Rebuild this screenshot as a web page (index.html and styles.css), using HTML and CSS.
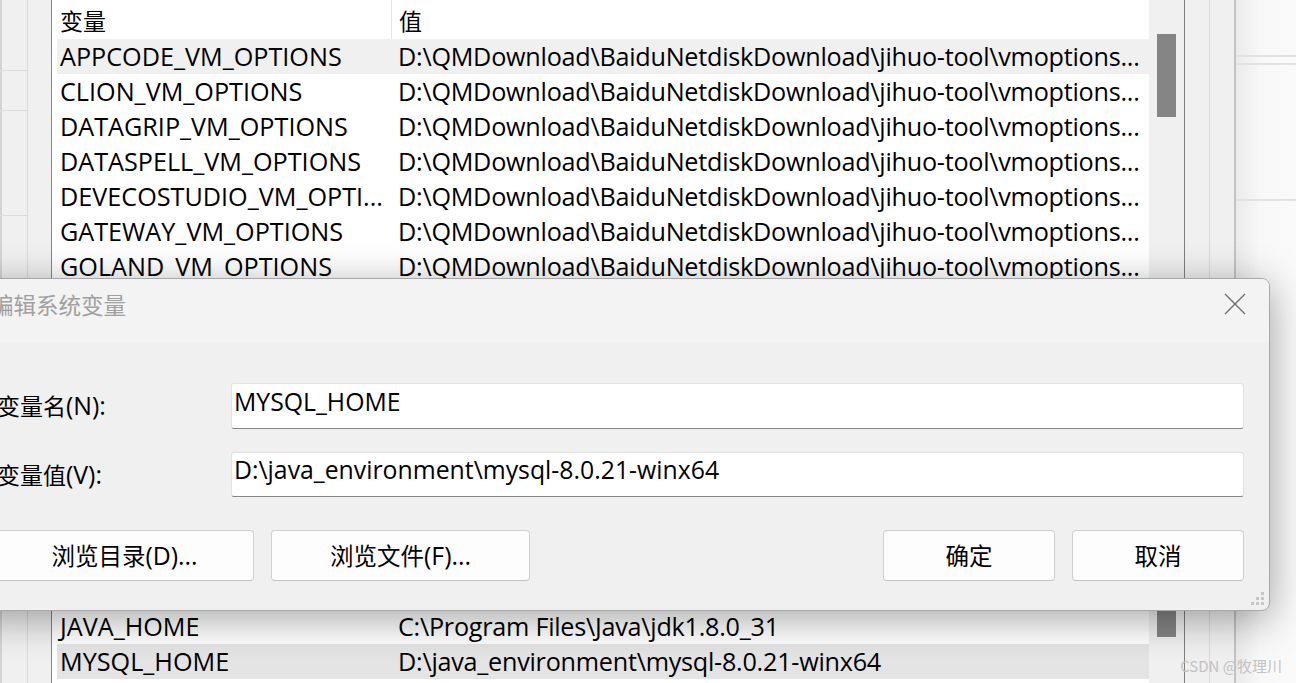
FILE: index.html
```html
<!DOCTYPE html>
<html lang="zh-CN">
<head>
    <meta charset="UTF-8">
    <title>编辑系统变量</title>
    <link rel="stylesheet" href="styles.css">
</head>
<body>
    <div class="screen">
        <div class="envwin">
            <div class="gutter">
                <div class="gutter-mark m1"></div>
                <div class="gutter-mark m2"></div>
                <div class="gutter-mark m3"></div>
            </div>
            <div class="varlist">
                <div class="list-head">
                    <div class="cell name"><span class="zh">变量</span></div>
                    <div class="cell value"><span class="zh">值</span></div>
                </div>
                <div class="row hover">
                    <div class="cell name">APPCODE_VM_OPTIONS</div>
                    <div class="cell value">D:\QMDownload\BaiduNetdiskDownload\jihuo-tool\vmoptions...</div>
                </div>
                <div class="row">
                    <div class="cell name">CLION_VM_OPTIONS</div>
                    <div class="cell value">D:\QMDownload\BaiduNetdiskDownload\jihuo-tool\vmoptions...</div>
                </div>
                <div class="row">
                    <div class="cell name">DATAGRIP_VM_OPTIONS</div>
                    <div class="cell value">D:\QMDownload\BaiduNetdiskDownload\jihuo-tool\vmoptions...</div>
                </div>
                <div class="row">
                    <div class="cell name">DATASPELL_VM_OPTIONS</div>
                    <div class="cell value">D:\QMDownload\BaiduNetdiskDownload\jihuo-tool\vmoptions...</div>
                </div>
                <div class="row">
                    <div class="cell name">DEVECOSTUDIO_VM_OPTI...</div>
                    <div class="cell value">D:\QMDownload\BaiduNetdiskDownload\jihuo-tool\vmoptions...</div>
                </div>
                <div class="row">
                    <div class="cell name">GATEWAY_VM_OPTIONS</div>
                    <div class="cell value">D:\QMDownload\BaiduNetdiskDownload\jihuo-tool\vmoptions...</div>
                </div>
                <div class="row">
                    <div class="cell name">GOLAND_VM_OPTIONS</div>
                    <div class="cell value">D:\QMDownload\BaiduNetdiskDownload\jihuo-tool\vmoptions...</div>
                </div>
                <div class="list-gap"></div>
                <div class="row">
                    <div class="cell name">JAVA_HOME</div>
                    <div class="cell value">C:\Program Files\Java\jdk1.8.0_31</div>
                </div>
                <div class="row selected">
                    <div class="cell name">MYSQL_HOME</div>
                    <div class="cell value">D:\java_environment\mysql-8.0.21-winx64</div>
                </div>
            </div>
            <div class="vscroll">
                <div class="thumb upper"></div>
                <div class="thumb lower"></div>
            </div>
            <div class="side"></div>
            <div class="backwin">
                <div class="back-rule r1"></div>
                <div class="back-rule r2"></div>
                <div class="back-rule r3"></div>
            </div>
        </div>

        <div class="dialog">
            <div class="dialog-title">
                <span class="title-text">编辑系统变量</span>
                <svg class="close" width="22" height="22" viewBox="0 0 22 22">
                    <path d="M1 1 L21 21 M21 1 L1 21" stroke="#6f6f6f" stroke-width="1.4" fill="none"/>
                </svg>
            </div>
            <div class="dialog-body">
                <div class="form">
                    <label for="varName"><span class="zh">变量名</span>(N):</label>
                    <input id="varName" class="field" type="text" value="MYSQL_HOME">
                    <label for="varValue"><span class="zh">变量值</span>(V):</label>
                    <input id="varValue" class="field short" type="text" value="D:\java_environment\mysql-8.0.21-winx64">
                </div>
                <div class="actions">
                    <div class="group">
                        <button class="btn wide"><span class="zh">浏览目录</span>(D)...</button>
                        <button class="btn wide"><span class="zh">浏览文件</span>(F)...</button>
                    </div>
                    <div class="group">
                        <button class="btn"><span class="zh">确定</span></button>
                        <button class="btn"><span class="zh">取消</span></button>
                    </div>
                </div>
            </div>
            <svg class="grip" width="16" height="16" viewBox="0 0 16 16">
                <rect x="12" y="2" width="3" height="3" fill="#c6c6c6"/>
                <rect x="7" y="7" width="3" height="3" fill="#c6c6c6"/>
                <rect x="12" y="7" width="3" height="3" fill="#c6c6c6"/>
                <rect x="2" y="12" width="3" height="3" fill="#c6c6c6"/>
                <rect x="7" y="12" width="3" height="3" fill="#c6c6c6"/>
                <rect x="12" y="12" width="3" height="3" fill="#c6c6c6"/>
            </svg>
        </div>

        <div class="watermark">CSDN @牧理川</div>
    </div>
</body>
</html>
```

FILE: styles.css
```css
body {
    margin: 0;
    font-family: "Open Sans", "Noto Sans CJK SC", sans-serif;
    color: #000;
    overflow: hidden;
}
.screen {
    position: relative;
    width: 1296px;
    height: 683px;
    overflow: hidden;
    background-color: #f0f0f0;
}
.envwin {
    display: flex;
    height: 683px;
}
.zh {
    font-family: "Noto Sans CJK SC", sans-serif;
    font-size: 23px;
}

/* left strip of the environment window */
.gutter {
    position: relative;
    width: 51px;
    flex-shrink: 0;
    border-right: 1px solid #858585;
    background: linear-gradient(to right, #d4d4d4 0 2px, #f0f0f0 2px 27px, #dadada 27px 28px, #f0f0f0 28px);
}
.gutter-mark {
    position: absolute;
    left: 0;
    width: 27px;
    height: 1px;
    background-color: #dcdcdc;
}
.gutter-mark.m1 { top: 70px; }
.gutter-mark.m2 { top: 110px; }
.gutter-mark.m3 { top: 215px; }

/* variable list */
.varlist {
    width: 1097px;
    flex-shrink: 0;
    background-color: #fff;
    display: flex;
    flex-direction: column;
    font-size: 25.2px;
}
.list-head,
.row {
    display: grid;
    grid-template-columns: 334px 1fr;
    margin-left: 5px;
    align-items: center;
}
.list-head {
    height: 39px;
}
.list-head .value {
    align-self: stretch;
    display: flex;
    align-items: center;
    border-left: 1px solid #e5e5e5;
    padding-left: 6px;
}
.row {
    height: 35px;
    line-height: 35px;
}
.row.hover {
    background-color: #f0f0f0;
}
.row.selected {
    background-color: #e4e4e4;
}
.cell {
    white-space: nowrap;
    overflow: hidden;
}
.cell.name {
    padding-left: 3px;
}
.cell.value {
    padding-left: 7px;
    letter-spacing: -0.25px;
}
.list-gap {
    height: 325px;
    flex-shrink: 0;
}

/* scroll bar */
.vscroll {
    width: 35px;
    flex-shrink: 0;
    border-right: 1px solid #7e7e7e;
    display: flex;
    flex-direction: column;
}
.thumb {
    width: 19px;
    margin-left: 8px;
    background-color: #858585;
}
.thumb.upper {
    margin-top: 34px;
    height: 83px;
}
.thumb.lower {
    margin-top: auto;
    margin-bottom: 46px;
    height: 40px;
}
.side {
    width: 49px;
    flex-shrink: 0;
    border-right: 2px solid #c3c3c3;
    background: linear-gradient(to right, #f0f0f0 0 24px, #d9d9d9 24px 25px, #f0f0f0 25px);
}
.backwin {
    flex: 1;
    position: relative;
    background: linear-gradient(to right, #ebebeb, #f8f8f8 40%, #fafafa);
}
.back-rule {
    position: absolute;
    left: 0;
    right: 0;
    height: 2px;
    background-color: #e2e2e2;
}
.back-rule.r1 { top: 55px; }
.back-rule.r2 { top: 63px; }
.back-rule.r3 { top: 199px; }

/* dialog */
.dialog {
    position: absolute;
    left: -30px;
    top: 278px;
    width: 1300px;
    height: 333px;
    box-sizing: border-box;
    border: 1px solid #a8a8a8;
    border-radius: 8px;
    background-color: #f0f0f0;
    box-shadow: 0 8px 40px rgba(0, 0, 0, 0.36);
    overflow: hidden;
}
.dialog-title {
    height: 64px;
    display: flex;
    align-items: center;
    justify-content: space-between;
    padding: 0 23px 14px 20px;
    box-sizing: border-box;
    background-color: #f3f3f3;
}
.title-text {
    font-family: "Noto Sans CJK SC", sans-serif;
    font-size: 22.5px;
    color: #a0a0a0;
}
.dialog-body {
    padding: 40px 25px 0 26px;
}
.form {
    display: grid;
    grid-template-columns: 234px 1fr;
    row-gap: 23px;
    align-items: center;
    font-size: 24.8px;
}
.form label {
    padding-bottom: 2px;
}
.field {
    box-sizing: border-box;
    height: 46px;
    width: 100%;
    margin: 0;
    padding: 0 2px 11px;
    border: 1px solid #e2e2e2;
    border-bottom: 1px solid #858585;
    border-radius: 3px;
    background-color: #fff;
    font-family: inherit;
    font-size: 24.8px;
    color: #000;
    outline: none;
}
.field.short {
    height: 45px;
}
.actions {
    display: flex;
    justify-content: space-between;
    margin-top: 33px;
    margin-left: -2px;
}
.group {
    display: flex;
    gap: 17px;
}
.btn {
    box-sizing: border-box;
    width: 172px;
    height: 51px;
    padding: 0 0 2px;
    border: 1px solid #d0d0d0;
    border-bottom-color: #c2c2c2;
    border-radius: 4px;
    background-color: #fdfdfd;
    font-family: inherit;
    font-size: 24.8px;
    color: #000;
}
.btn .zh {
    font-size: 23.5px;
}
.btn.wide {
    width: 259px;
}
.grip {
    position: absolute;
    right: 4px;
    bottom: 4px;
}

.watermark {
    position: absolute;
    right: 14px;
    bottom: 7px;
    font-family: "Noto Sans CJK SC", sans-serif;
    font-size: 15px;
    color: #c3c3c3;
}
```
